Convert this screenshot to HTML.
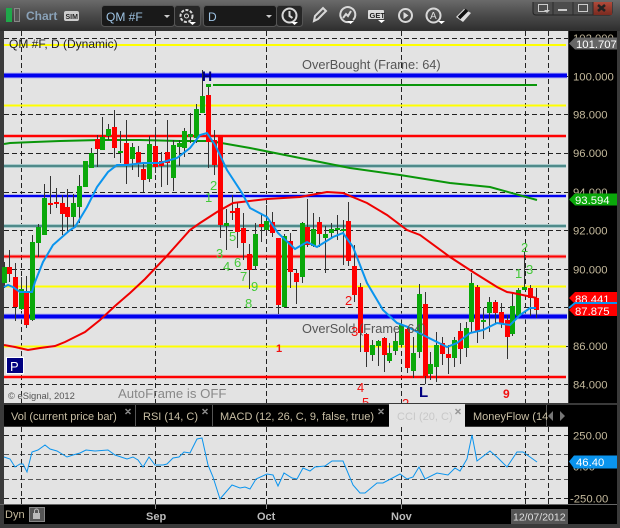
<!DOCTYPE html>
<html><head><meta charset="utf-8"><style>
html,body{margin:0;padding:0;background:#3a3a3a}
svg{display:block}
text{font-family:"Liberation Sans",sans-serif}
.ax{fill:#c4b99c;font-size:11.3px}
.g{fill:#45c83a;font-size:13px}
.r{fill:#f01010;font-size:13px}
.tb{fill:#c9bfa5;font-size:11px}
.ic{fill:none;stroke:#d8d8d8;stroke-width:2}
</style></head><body>
<svg width="620" height="528" viewBox="0 0 620 528" xmlns="http://www.w3.org/2000/svg">
<defs><linearGradient id="top" x1="0" y1="0" x2="0" y2="1"><stop offset="0" stop-color="#6a6a6a"/><stop offset=".5" stop-color="#4a4a4a"/><stop offset="1" stop-color="#2e2e2e"/></linearGradient>
<linearGradient id="cl" x1="0" y1="0" x2="0" y2="1"><stop offset="0" stop-color="#b04a3a"/><stop offset="1" stop-color="#7a2a20"/></linearGradient></defs>
<rect width="620" height="528" fill="#3a3a3a"/>
<rect width="620" height="31" fill="url(#top)"/>
<!-- status -->
<rect x="6" y="8" width="6" height="14" fill="#1fa84a"/>
<rect x="14.500" y="8.500" width="5" height="13" fill="#555" stroke="#888"/>
<text x="26" y="20" font-size="12" font-weight="bold" fill="#8aa2b8">Chart</text>
<rect x="64" y="11" width="15" height="10" rx="2" fill="#ccc"/>
<text x="65.500" y="19" font-size="7" font-weight="bold" fill="#222">SIM</text>
<!-- dropdowns -->
<rect x="101.500" y="5.500" width="73" height="21" rx="3" fill="#191919" stroke="#555"/>
<rect x="174.500" y="5.500" width="26" height="21" rx="3" fill="#262626" stroke="#555"/>
<rect x="203.500" y="5.500" width="73" height="21" rx="3" fill="#191919" stroke="#555"/>
<rect x="276.500" y="5.500" width="26" height="21" rx="3" fill="#262626" stroke="#555"/>
<text x="106" y="21" font-size="12" fill="#9fc4e4">QM #F</text>
<text x="208" y="21" font-size="12" fill="#9fc4e4">D</text>
<path d="M164 15h6l-3 3zM266 15h6l-3 3z" fill="#ccc"/>
<circle cx="186.500" cy="16" r="6" class="ic" stroke-dasharray="3 1.500" stroke-width="3"/>
<circle cx="186.500" cy="16" r="2" fill="none" stroke="#ddd"/>
<path d="M189 22h7l-3.500 3z" fill="#fff"/>
<circle cx="289.500" cy="15.500" r="7" class="ic"/><path d="M289.500 11v5l3 2" class="ic" stroke-width="1.500"/>
<path d="M291 22h7l-3.500 3z" fill="#fff"/>
<!-- toolbar icons -->
<path d="M314 21l1-5 8-8 3 3-8 8z" class="ic" stroke="#bbb" stroke-width="1.500"/>
<path d="M353 20a7.500 7.500 0 1 0-4 2" class="ic" stroke="#ccc"/><path d="M343 18l3-4 2 2 3-5" class="ic" stroke-width="1.500"/>
<path d="M347 21h7l-3.500 3z" fill="#fff"/>
<rect x="368" y="10" width="16" height="9" rx="1" fill="#ddd"/>
<text x="369.500" y="18" font-size="7.500" font-weight="bold" fill="#222">GET</text>
<path d="M378 20h7l-3.500 3z" fill="#fff"/>
<circle cx="405.500" cy="15.500" r="6.500" class="ic" stroke="#ccc"/><path d="M403.500 12v7l5-3.500z" fill="#ddd"/>
<circle cx="433.500" cy="15.500" r="7" class="ic" stroke="#ccc"/>
<text x="430" y="19" font-size="10" fill="#ddd">A</text>
<path d="M438 21h7l-3.500 3z" fill="#fff"/>
<path d="M456 17l8-8 7 4-8 9z" fill="#ddd"/><path d="M459 18l8-8" stroke="#111" stroke-width="3.500"/>
<!-- window buttons -->
<path d="M533 2v10q0 3 3 3h73q3 0 3-3V2" fill="#4d4d4d" stroke="#222"/>
<rect x="593" y="2" width="19" height="13" fill="url(#cl)"/>
<path d="M553 2v13M573 2v13M593 2v13" stroke="#2a2a2a"/>
<rect x="538.500" y="4.500" width="9" height="7" fill="none" stroke="#ccc"/>
<path d="M544 10h6l-3 3z" fill="#ccc"/>
<rect x="558" y="9" width="9" height="2" fill="#ccc"/>
<rect x="578.500" y="4.500" width="9" height="7" fill="none" stroke="#ccc"/>
<path d="M598 5l7 6m0-6l-7 6" stroke="#222" stroke-width="2.500"/>
<!-- chart -->
<rect x="4" y="31" width="564" height="372" fill="#e3e3e3"/>
<rect x="569" y="31" width="48" height="372" fill="#000"/>
<g shape-rendering="crispEdges">
<path d="M4 38.500H568M4 76.500H568M4 114.500H568M4 153.500H568M4 192.500H568M4 230.500H568M4 269.500H568M4 307.500H568M4 346.500H568M4 384.500H568" stroke="#222" stroke-dasharray="5 3"/>
<path d="M21.500 31V403M155.500 31V403M266.500 31V403M401.500 31V403M525.500 31V403M548.500 31V403" stroke="#222" stroke-dasharray="5 3"/>
<path d="M4 45H566M4 105.500H566M4 286.500H566M4 346.500H566" stroke="#ffff00" stroke-width="2"/>
<path d="M4 136H566M4 256.500H566M4 377H566" stroke="#ff0000" stroke-opacity=".25" stroke-width="4"/>
<path d="M4 136H566M4 256.500H566M4 377H566" stroke="#ff0000" stroke-width="2"/>
<path d="M4 166H566M4 226H566" stroke="#a9c9c9" stroke-width="4"/>
<path d="M4 166H566M4 226H566" stroke="#4f8a8a" stroke-width="2"/>
<path d="M4 196H566" stroke="#b0b0f0" stroke-width="4"/>
<path d="M4 196H566" stroke="#0000ee" stroke-width="2"/>
<path d="M4 75.500H567M4 316.500H567" stroke="#b8b8ee" stroke-width="6"/>
<path d="M4 75.500H567M4 316.500H567" stroke="#0000ee" stroke-width="4"/>
<path d="M213 85H537" stroke="#0a960a" stroke-width="2"/>
</g>
<!-- green MA -->
<path d="M4 144L10 143 34 142 60 141 100 140 140 140 180 141 210 141 250 148 300 158 350 168 400 175 450 183 490 187 537 200" fill="none" stroke="#0a960a" stroke-width="2"/>
<!-- wicks -->
<path shape-rendering="crispEdges" stroke="#333" fill="none" d="M4.500 262V288M9.500 250V282M15.500 263V321M21.500 277V310M26.500 276V328M32.500 235V321M38.500 224V257M44.500 184V234M50.500 176V214M56.500 188V208M62.500 195V235M67.500 189V232M73.500 194V227M79.500 175V223M85.500 161V187M91.500 148V168M97.500 135V167M102.500 117V148M108.500 124V140M114.500 110V158M120.500 131V163M126.500 120V184M132.500 143V170M138.500 146V177M143.500 162V192M149.500 136V182M155.500 127V173M161.500 152V187M167.500 120V185M173.500 140V191M179.500 140V166M184.500 128V157M190.500 113V143M196.500 104V143M202.500 70V113M208.500 84V168M214.500 130V175M220.500 135V238M226.500 209V250M232.500 195V220M237.500 203V248M243.500 213V260M249.500 244V289M255.500 223V270M261.500 213V242M266.500 205V233M272.500 212V237M278.500 238V314M284.500 234V308M290.500 233V288M296.500 270V304M302.500 222V283M307.500 199V247M313.500 213V247M319.500 217V247M325.500 226V273M331.500 223V238M337.500 215V240M343.500 220V265M348.500 202V266M354.500 245V302M360.500 283V352M366.500 333V367M372.500 340V361M378.500 340V366M384.500 337V372M389.500 343V363M395.500 332V355M401.500 323V347M407.500 327V373M413.500 337V378M419.500 284V358M425.500 292V384M430.500 352V380M436.500 332V382M442.500 337V365M448.500 345V374M454.500 337V367M460.500 323V364M466.500 322V357M471.500 273V333M477.500 285V343M483.500 308V339M489.500 297V332M495.500 300V323M501.500 303V328M507.500 315V359M512.500 293V336M518.500 288V317M524.500 252V290M530.500 285V316M536.500 288V318"/>
<!-- green bodies -->
<path shape-rendering="crispEdges" stroke="#0aa80a" stroke-width="5" fill="none" d="M4.500 267V283M21.500 289V309M32.500 242V320M38.500 227V243M44.500 198V235M73.500 203V217M79.500 186V207M85.500 161V187M91.500 153V168M102.500 137V150M108.500 129V136M120.500 151V153M132.500 147V159M149.500 144V179M173.500 145V178M179.500 143V147M184.500 131V148M190.500 134V137M196.500 109V138M202.500 96V113M208.500 84V87M226.500 223V226M255.500 234V266M266.500 221V230M284.500 236V307M302.500 223V277M313.500 229V246M325.500 234V238M331.500 229V233M337.500 228V230M343.500 229V231M372.500 345V355M378.500 341V346M389.500 353V361M395.500 341V351M401.500 325V345M413.500 353V371M419.500 294V352M430.500 364V374M436.500 345V367M454.500 340V358M466.500 328V348M471.500 283V322M483.500 320V322M489.500 302V313M512.500 306V334M518.500 290V316M524.500 287V290"/>
<!-- red bodies -->
<path shape-rendering="crispEdges" stroke="#ff0000" stroke-width="5" fill="none" d="M9.500 267V274M15.500 277V307M26.500 291V325M50.500 203V205M56.500 202V204M62.500 203V214M67.500 207V217M97.500 139V149M114.500 127V148M126.500 143V164M138.500 152V163M143.500 169V180M155.500 146V167M161.500 161V166M167.500 152V163M208.500 95V142M214.500 140V165M220.500 135V225M232.500 211V213M237.500 208V232M243.500 228V243M249.500 254V270M261.500 224V227M272.500 222V233M278.500 238V305M290.500 241V272M296.500 273V282M307.500 227V245M319.500 222V234M348.500 221V261M354.500 266V295M360.500 287V333M366.500 334V352M384.500 338V355M407.500 329V368M425.500 304V376M442.500 343V354M448.500 354V358M460.500 331V349M477.500 287V332M495.500 302V313M501.500 312V324M507.500 320V337M530.500 288V298M536.500 298V310"/>
<!-- MAs -->
<path d="M4 345L15 347 28 350 40 348 55 346 65 342 75 337 85 332 100 320 115 306 130 293 145 279 165 258 190 230 200 223 217 212 233 203 267 199 300 197 327 192 343 193 367 203 387 215 407 230 420 235 450 257 473 272 497 287 507 292 513 293 537 298" fill="none" stroke="#f00000" stroke-width="2"/>
<path d="M4 287L8 285 13 287 20 292 32 292 35 282 43 262 53 245 70 230 75 227 87 207 97 187 108 172 117 165 127 165 143 163 160 163 177 158 190 148 200 135 207 133 215 145 220 155 227 170 242 193 250 208 267 217 278 233 295 249 307 242 317 247 333 237 343 233 353 247 367 283 383 310 397 323 408 327 427 337 447 347 457 343 470 333 483 330 497 323 510 325 520 315 530 308 536 308" fill="none" stroke="#0a94ee" stroke-width="2"/>
<!-- chart text -->
<text x="9" y="48" font-size="12" fill="#222">QM #F, D (Dynamic)</text>
<text x="302" y="69" font-size="12.800" fill="#555">OverBought (Frame: 64)</text>
<text x="302" y="333" font-size="12.800" fill="#555">OverSold (Frame: 64)</text>
<text x="118" y="398" font-size="13.200" fill="#888">AutoFrame is OFF</text>
<text x="8" y="399" font-size="9.400" fill="#555">© eSignal, 2012</text>
<rect x="6.500" y="357.500" width="17" height="16" fill="#000080" stroke="#fff"/>
<text x="10" y="371" font-size="13" fill="#fff">P</text>
<text x="202" y="81" font-size="14" font-weight="bold" fill="#000080">H</text>
<text x="419" y="397" font-size="15" font-weight="bold" fill="#000080">L</text>
<text class="g" x="210" y="190">2</text><text class="g" x="205" y="202">1</text><text class="g" x="216" y="258">3</text><text class="g" x="223" y="271">4</text><text class="g" x="229" y="241">5</text><text class="g" x="234" y="267">6</text><text class="g" x="240" y="281">7</text><text class="g" x="251" y="291">9</text><text class="g" x="245" y="308">8</text>
<text class="g" x="521" y="252">2</text><text class="g" x="515" y="278">1</text><text class="g" x="526" y="274">3</text>
<text class="r" x="345" y="305">2</text><text class="r" x="351" y="336">3</text><text class="r" x="276" y="352" font-weight="bold" style="font-size:11px">1</text><text class="r" x="357" y="392">4</text><text class="r" x="362" y="407">5</text><text class="r" x="503" y="398" font-weight="bold" style="font-size:12px">9</text><text class="r" x="402" y="408">2</text>
<!-- axis -->
<text class="ax" x="573" y="42">102.000</text>
<text class="ax" x="573" y="80.500">100.000</text>
<text class="ax" x="573" y="118.500">98.000</text>
<text class="ax" x="573" y="157">96.000</text>
<text class="ax" x="573" y="196">94.000</text>
<text class="ax" x="573" y="234.500">92.000</text>
<text class="ax" x="573" y="273.500">90.000</text>
<text class="ax" x="573" y="350">86.000</text>
<text class="ax" x="573" y="388.500">84.000</text>
<path d="M569 43.500l6-6h42v12h-42z" fill="#666"/>
<text x="576" y="48" font-size="11.300" fill="#fff">101.707</text>
<path d="M569 199.500l6-6h42v12h-42z" fill="#0aa80a"/>
<text x="575" y="204" font-size="11.300" fill="#fff">93.594</text>
<path d="M569 298l6-6h42v12h-42z" fill="#f00"/>
<text x="575" y="303" font-size="11.300" fill="#fff">88.441</text>
<path d="M569 310l6-6h42v12h-42z" fill="#f00"/>
<text x="575" y="315" font-size="11.300" fill="#fff">87.875</text>
<path d="M569 308l6-5h42" fill="none" stroke="#0a94ee" stroke-width="2"/>
<!-- tabs -->
<rect x="0" y="403" width="620" height="3" fill="#3a3a3a"/>
<rect x="4" y="405" width="613" height="21" fill="#000"/>
<path d="M135.500 405v21M212.500 405v21M546.500 405v21" stroke="#555"/>
<rect x="389" y="404" width="76" height="23" fill="#e3e3e3"/>
<text class="tb" x="11" y="420">Vol (current price bar)</text>
<text class="tb" x="143" y="420">RSI (14, C)</text>
<text class="tb" x="220" y="420">MACD (12, 26, C, 9, false, true)</text>
<text x="397" y="420" font-size="11" fill="#c8c8c8">CCI (20, C)</text>
<text class="tb" x="473" y="420">MoneyFlow (14</text>
<path d="M125.500 409l5 5m0-5l-5 5M202.500 409l5 5m0-5l-5 5M378.500 409l5 5m0-5l-5 5" stroke="#888" stroke-width="1.500"/>
<path d="M455.500 409l5 5m0-5l-5 5" stroke="#999" stroke-width="1.500"/>
<path d="M553 411v10l-5-5zM560 411v10l5-5z" fill="#777"/>
<!-- lower panel -->
<rect x="4" y="427" width="564" height="77" fill="#e3e3e3"/>
<rect x="568" y="426" width="49" height="79" fill="#000"/>
<g shape-rendering="crispEdges">
<path d="M4 435.500H568M4 466.500H568M4 498.500H568" stroke="#222" stroke-dasharray="5 3"/>
<path d="M4 454.500H568M4 479.500H568" stroke="#555" stroke-dasharray="5 3"/>
<path d="M21.500 427V504M155.500 427V504M266.500 427V504M401.500 427V504M525.500 427V504M548.500 427V504" stroke="#222" stroke-dasharray="5 3"/>
</g>
<path d="M4 457L10 459 15 467 20 464 23 464 27 472 32 452 38 450 45 445 50 449 57 451 67 457 73 455 80 453 86 450 95 451 108 450 115 455 127 459 133 457 138 460 143 467 149 457 155 465 163 465 167 464 173 458 179 457 184 452 190 453 197 439 202 438 208 465 213 477 220 499 232 485 240 488 245 487 250 489 256 479 267 474 273 475 278 486 284 473 292 478 297 479 303 468 310 471 315 467 325 466 332 461 343 461 353 485 360 493 365 493 377 483 383 483 400 474 407 479 413 477 419 467 425 479 437 473 448 475 455 468 460 471 467 459 472 435 477 461 490 451 498 458 507 467 517 452 523 452 537 462" fill="none" stroke="#0a94ee" stroke-width="1"/>
<text class="ax" x="573" y="439.500">250.00</text>
<text class="ax" x="573" y="470.500">0.00</text>
<text class="ax" x="570" y="502.500">-250.00</text>
<path d="M569 461.500l5-6h43v13h-43z" fill="#0a94ee"/>
<text x="576" y="466" font-size="11.300" fill="#fff">46.40</text>
<!-- bottom strip -->
<rect x="4" y="505" width="613" height="19" fill="#000"/>
<rect x="0" y="504" width="617" height="1" fill="#666"/>
<path d="M155.500 505v4M266.500 505v4M401.500 505v4" stroke="#888"/>
<text x="5" y="518" font-size="11" fill="#c4b99c">Dyn</text>
<rect x="29.500" y="507.500" width="15" height="14" fill="#555" stroke="#888"/>
<rect x="33" y="513" width="7" height="6" fill="#bbb"/><path d="M34.500 513v-2a2 2 0 0 1 4 0v2" fill="none" stroke="#bbb"/>
<text x="146" y="520" font-size="11" font-weight="bold" fill="#bbb">Sep</text>
<text x="257" y="520" font-size="11" font-weight="bold" fill="#bbb">Oct</text>
<text x="391" y="520" font-size="11" font-weight="bold" fill="#bbb">Nov</text>
<rect x="511" y="509" width="57" height="15" fill="#555"/>
<text x="513" y="520.500" font-size="10.500" fill="#e0e0e0">12/07/2012</text>
</svg>
</body></html>
